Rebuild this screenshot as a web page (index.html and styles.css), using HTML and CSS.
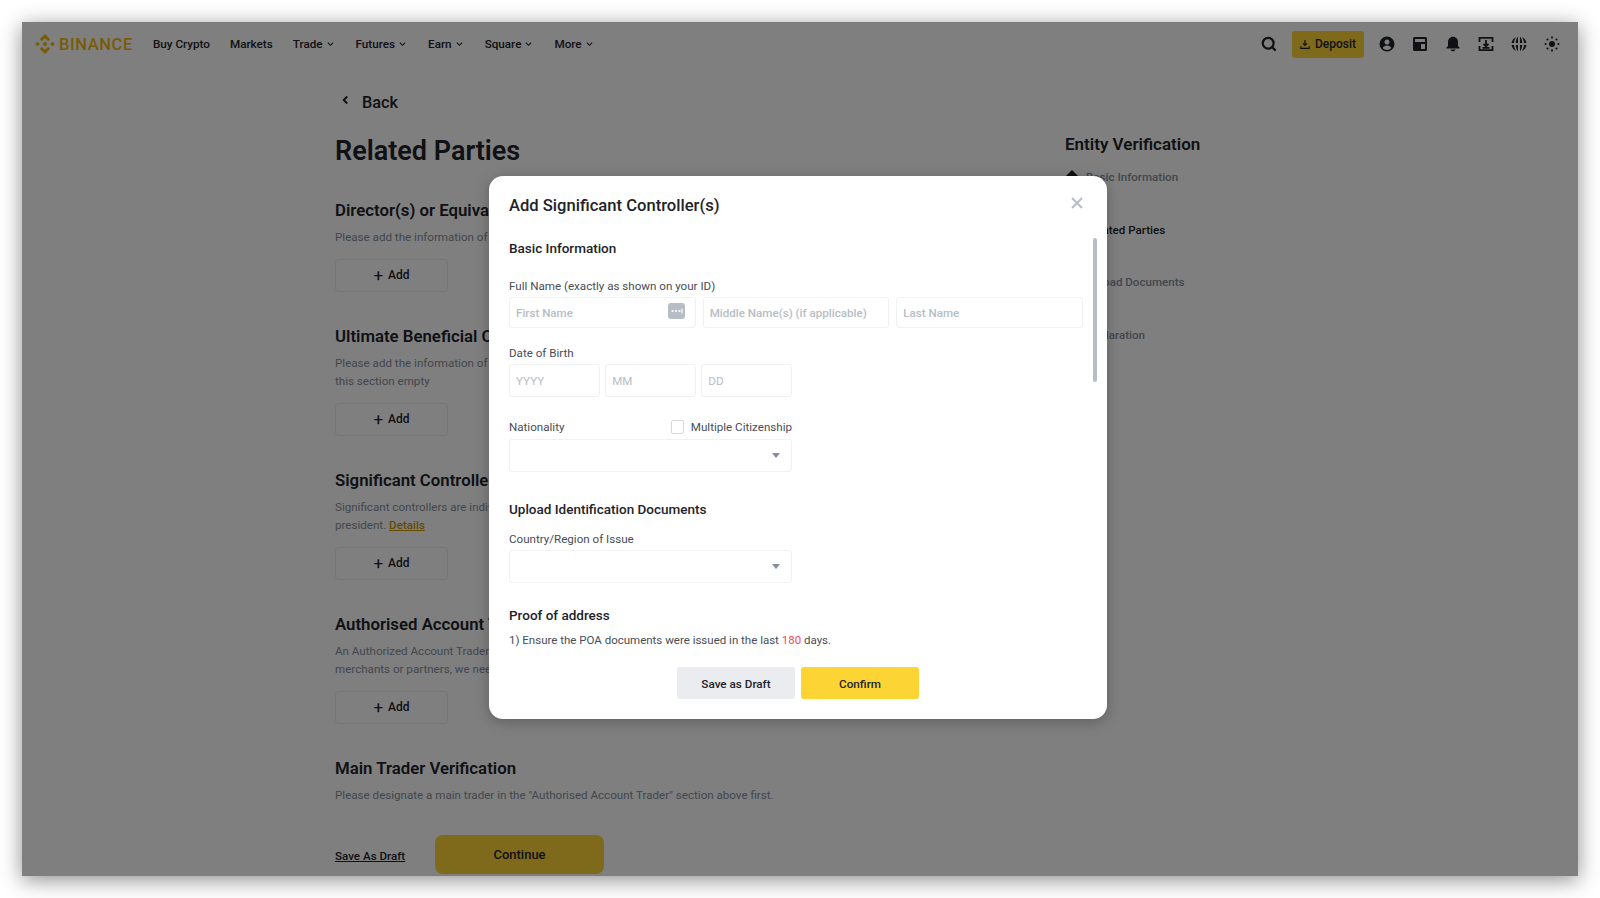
FILE: index.html
```html
<!DOCTYPE html>
<html lang="en">
<head>
    <meta charset="UTF-8">
    <title>Related Parties</title>
    <link rel="stylesheet" href="styles.css">
</head>
<body>
    <div class="frame">
        <header class="nav">
            <a class="logo">
                <svg class="logo-mark" viewBox="2 2 20 20"><path d="M12 2l5.200 5.200-2.100 2.100L12 6.200 8.900 9.300 6.800 7.200zM12 22l5.200-5.200-2.100-2.100-3.100 3.100-3.100-3.100-2.100 2.100zM2.200 12l2.300-2.300L6.800 12l-2.300 2.300zM17.200 12l2.300-2.300 2.300 2.300-2.300 2.300zM12 9.500l2.500 2.500-2.500 2.500L9.500 12z"/></svg>
                <span>BINANCE</span>
            </a>
            <nav class="menu">
                <a>Buy Crypto</a>
                <a>Markets</a>
                <a class="has-caret">Trade <svg class="caret" viewBox="0 0 8 6"><path d="M1 1.500l3 3 3-3"/></svg></a>
                <a class="has-caret">Futures <svg class="caret" viewBox="0 0 8 6"><path d="M1 1.500l3 3 3-3"/></svg></a>
                <a class="has-caret">Earn <svg class="caret" viewBox="0 0 8 6"><path d="M1 1.500l3 3 3-3"/></svg></a>
                <a class="has-caret">Square <svg class="caret" viewBox="0 0 8 6"><path d="M1 1.500l3 3 3-3"/></svg></a>
                <a class="has-caret">More <svg class="caret" viewBox="0 0 8 6"><path d="M1 1.500l3 3 3-3"/></svg></a>
            </nav>
            <div class="nav-right">
                <svg class="nav-icon search" viewBox="0 0 16 16"><circle cx="7.200" cy="7.200" r="5.400"/><path d="M11 11l3.600 3.600"/></svg>
                <button class="deposit">
                    <svg class="deposit-icon" viewBox="0 0 12 12"><path d="M6 .5v6M3.700 4.500L6 7l2.300-2.500M1 8v2.500h10V8" /></svg>
                    Deposit
                </button>
                <div class="nav-icons">
                    <svg class="nav-icon filled" viewBox="0 0 16 16"><path fill-rule="evenodd" d="M8 .5a7.500 7.500 0 100 15 7.500 7.500 0 000-15zm0 3a2.500 2.500 0 110 5 2.500 2.500 0 010-5zM3.600 12c.8-1.600 2.500-2.500 4.400-2.500s3.600.9 4.400 2.500A6 6 0 018 14a6 6 0 01-4.400-2z"/></svg>
                    <svg class="nav-icon filled" viewBox="0 0 16 16"><path fill-rule="evenodd" d="M2.500 1h11A1.500 1.500 0 0115 2.500v11a1.500 1.500 0 01-1.500 1.500h-11A1.500 1.500 0 011 13.500v-11A1.500 1.500 0 012.500 1zM3 3v3h10V3zm6 5v5h4V8z"/></svg>
                    <svg class="nav-icon filled" viewBox="0 0 16 16"><path d="M8 .8c-3 0-5 2.300-5 5.200v4L1.500 11.500v1h13v-1L13 10V6C13 3.100 11 .8 8 .8zM5.500 13.500h5C10.200 14.700 9.200 15.300 8 15.300s-2.200-.6-2.500-1.800z"/></svg>
                    <svg class="nav-icon scan" viewBox="0 0 16 16"><path d="M1.500 6V1.800h13V6M1.500 10v4.200h13V10M8 4v6M5.500 7.800L8 10.300l2.500-2.500M4.500 11.800h7"/></svg>
                    <svg class="nav-icon filled" viewBox="0 0 16 16"><path fill-rule="evenodd" d="M7 .6v6.400H4.800c.1-2.500.9-4.900 2.200-6.400zM9 .6c1.300 1.500 2.100 3.900 2.200 6.400H9zM5 1.200C3.900 2.800 3.100 4.800 3 7H.6C.9 4.300 2.600 2.100 5 1.200zM11 1.200c2.400.9 4.100 3.100 4.400 5.800H13c-.1-2.200-.9-4.200-2-5.800zM.6 9H3c.1 2.200.9 4.200 2 5.800C2.600 13.900.9 11.700.6 9zM4.800 9H7v6.400C5.700 13.900 4.900 11.500 4.800 9zM9 9h2.200c-.1 2.500-.9 4.900-2.200 6.400zM13 9h2.400c-.3 2.700-2 4.900-4.400 5.800 1.100-1.600 1.900-3.600 2-5.800z"/></svg>
                    <svg class="nav-icon filled" viewBox="0 0 16 16"><circle cx="8" cy="8" r="3"/><circle cx="8" cy="1.600" r="1.100"/><circle cx="8" cy="14.400" r="1.100"/><circle cx="1.600" cy="8" r="1.100"/><circle cx="14.400" cy="8" r="1.100"/><circle cx="3.500" cy="3.500" r="1.100"/><circle cx="12.500" cy="3.500" r="1.100"/><circle cx="3.500" cy="12.500" r="1.100"/><circle cx="12.500" cy="12.500" r="1.100"/></svg>
                </div>
            </div>
        </header>

        <main class="page">
            <div class="content">
                <a class="back">
                    <svg class="back-icon" viewBox="0 0 8 10"><path d="M6 1L2 5l4 4"/></svg>
                    Back
                </a>
                <h1>Related Parties</h1>

                <section class="section first">
                    <h2>Director(s) or Equivalent</h2>
                    <p>Please add the information of your company's directors or equivalent.</p>
                    <button class="add"><span class="plus">+</span> Add</button>
                </section>

                <section class="section">
                    <h2>Ultimate Beneficial Owner(s)</h2>
                    <p>Please add the information of all ultimate beneficial owners. If there are none, you may leave<br>this section empty</p>
                    <button class="add"><span class="plus">+</span> Add</button>
                </section>

                <section class="section">
                    <h2>Significant Controller(s)</h2>
                    <p>Significant controllers are individuals with significant control of the entity, such as a CEO or<br>president. <a class="details">Details</a></p>
                    <button class="add"><span class="plus">+</span> Add</button>
                </section>

                <section class="section">
                    <h2>Authorised Account Trader(s)</h2>
                    <p>An Authorized Account Trader is a person acting on behalf of the entity. To protect our<br>merchants or partners, we need the information of every trader.</p>
                    <button class="add"><span class="plus">+</span> Add</button>
                </section>

                <section class="section">
                    <h2>Main Trader Verification</h2>
                    <p>Please designate a main trader in the "Authorised Account Trader" section above first.</p>
                </section>

                <div class="page-actions">
                    <a class="save-link">Save As Draft</a>
                    <button class="continue">Continue</button>
                </div>
            </div>

            <aside class="side">
                <h3>Entity Verification</h3>
                <ul class="steps">
                    <li><i class="step-dot"></i>Basic Information</li>
                    <li class="current"><i class="step-dot"></i>Related Parties</li>
                    <li><i class="step-dot"></i>Upload Documents</li>
                    <li><i class="step-dot"></i>Declaration</li>
                </ul>
            </aside>
        </main>

        <div class="overlay">
            <div class="modal">
                <div class="modal-head">
                    <h2>Add Significant Controller(s)</h2>
                    <svg class="close" viewBox="0 0 12 12"><path d="M1 1l10 10M11 1L1 11"/></svg>
                </div>
                <div class="modal-body">
                    <h4 class="block-title">Basic Information</h4>

                    <label class="label name-label">Full Name (exactly as shown on your ID)</label>
                    <div class="name-row">
                        <div class="input">First Name
                            <svg class="key-icon" viewBox="0 0 17 16"><rect width="17" height="16" rx="3"/><circle cx="4.500" cy="8" r="1.100"/><circle cx="8" cy="8" r="1.100"/><circle cx="11.500" cy="8" r="1.100"/><path d="M14 5.500v5"/></svg>
                        </div>
                        <div class="input">Middle Name(s) (if applicable)</div>
                        <div class="input">Last Name</div>
                    </div>

                    <label class="label dob-label">Date of Birth</label>
                    <div class="dob-row">
                        <div class="input tall">YYYY</div>
                        <div class="input tall">MM</div>
                        <div class="input tall">DD</div>
                    </div>

                    <div class="nat-row">
                        <label class="label">Nationality</label>
                        <label class="check"><i class="box"></i>Multiple Citizenship</label>
                    </div>
                    <div class="select nat-select"><i class="arrow"></i></div>

                    <h4 class="block-title upload-title">Upload Identification Documents</h4>
                    <label class="label country-label">Country/Region of Issue</label>
                    <div class="select country-select"><i class="arrow"></i></div>

                    <h4 class="block-title proof-title">Proof of address</h4>
                    <p class="note">1) Ensure the POA documents were issued in the last <span class="red">180</span> days.</p>
                </div>
                <div class="modal-foot">
                    <button class="btn grey">Save as Draft</button>
                    <button class="btn yellow">Confirm</button>
                </div>
                <div class="scrollbar"></div>
            </div>
        </div>
    </div>
</body>
</html>
```

FILE: styles.css
```css
* {
    box-sizing: border-box;
}
html, body {
    height: 100%;
}
body {
    margin: 0;
    padding: 22px;
    background: #fff;
    overflow: hidden;
    font-family: Roboto, "Noto Sans", sans-serif;
    color: #1e2329;
}
h1, h2, h3, h4, p, ul {
    margin: 0;
    padding: 0;
}
button {
    font-family: inherit;
    border: 0;
    cursor: pointer;
}

.frame {
    position: relative;
    width: 1556px;
    height: 854px;
    background: #fff;
    overflow: hidden;
    box-shadow: 0 4px 20px rgba(0, 0, 0, .45);
}

/* top bar */
.nav {
    display: flex;
    align-items: center;
    height: 44px;
    padding: 0 18px 0 13px;
}
.logo {
    display: flex;
    align-items: center;
    gap: 4px;
    color: #f0b90b;
    font-size: 16.500px;
    font-weight: 500;
    letter-spacing: .6px;
}
.logo-mark {
    width: 20px;
    height: 20px;
    fill: #f0b90b;
}
.menu {
    display: flex;
    align-items: center;
    gap: 20px;
    margin-left: 20px;
    font-size: 11.700px;
    font-weight: 500;
}
.has-caret {
    display: flex;
    align-items: center;
    gap: 4px;
    margin-right: 2px;
}
.caret {
    width: 7px;
    height: 6px;
    fill: none;
    stroke: #1e2329;
    stroke-width: 1.300;
}
.nav-right {
    display: flex;
    align-items: center;
    margin-left: auto;
}
.nav-icons {
    display: flex;
    gap: 17px;
    margin-left: 15px;
}
.nav-icon {
    display: block;
    width: 16px;
    height: 16px;
}
.nav-icon.filled {
    fill: #1e2329;
}
.nav-icon.search {
    margin-right: 15px;
    fill: none;
    stroke: #1e2329;
    stroke-width: 2.200;
}
.nav-icon.scan {
    fill: none;
    stroke: #1e2329;
    stroke-width: 1.800;
}
.deposit {
    display: flex;
    align-items: center;
    justify-content: center;
    gap: 5px;
    width: 72px;
    height: 27px;
    border-radius: 3px;
    background: #fcd535;
    font-size: 12px;
    font-weight: 500;
    color: #1e2329;
}
.deposit-icon {
    width: 10px;
    height: 11px;
    fill: none;
    stroke: #1e2329;
    stroke-width: 1.500;
}

/* page behind the dialog */
.page {
    display: flex;
    padding-left: 313px;
}
.content {
    width: 730px;
}
.back {
    display: flex;
    align-items: center;
    gap: 13px;
    height: 24px;
    margin: 24px 0 0 7px;
    font-size: 16.300px;
    font-weight: 500;
}
.back-icon {
    width: 7px;
    height: 10px;
    margin-top: -4px;
    fill: none;
    stroke: #1e2329;
    stroke-width: 2.200;
}
h1 {
    margin-top: 19px;
    font-size: 27px;
    line-height: 36px;
    font-weight: 600;
}
.section {
    margin-top: 33px;
}
.section.first {
    margin-top: 30px;
}
.section h2 {
    font-size: 16.800px;
    line-height: 22px;
    font-weight: 600;
}
.section p {
    margin-top: 7px;
    font-size: 11.600px;
    line-height: 18px;
    color: #848e9c;
}
.details {
    color: #c99400;
    font-weight: 500;
    text-decoration: underline;
}
.add {
    display: flex;
    align-items: center;
    justify-content: center;
    gap: 5px;
    width: 113px;
    height: 33.500px;
    margin-top: 12.500px;
    background: #fff;
    border: 1px solid #eaecef;
    border-radius: 4px;
    font-size: 12px;
    font-weight: 500;
    color: #1e2329;
}
.plus {
    font-size: 17px;
    line-height: 1;
    font-weight: 400;
}
.page-actions {
    display: flex;
    align-items: center;
    gap: 30px;
    margin-top: 31px;
}
.save-link {
    width: 70px;
    padding-top: 2px;
    font-size: 11.600px;
    font-weight: 500;
    white-space: nowrap;
    text-decoration: underline;
}
.continue {
    width: 169px;
    height: 39px;
    border-radius: 8px;
    background: #fcd535;
    font-size: 13px;
    font-weight: 500;
    color: #1e2329;
}

/* steps on the right */
.side {
    margin-top: 66px;
}
.side h3 {
    font-size: 17px;
    line-height: 24px;
    font-weight: 600;
}
.steps {
    margin-top: 11px;
    list-style: none;
    font-size: 11.600px;
    color: #848e9c;
    font-weight: 500;
}
.steps li {
    display: flex;
    align-items: center;
    gap: 9px;
    height: 20px;
    margin-bottom: 32.500px;
}
.steps .current {
    color: #1e2329;
}
.step-dot {
    width: 10px;
    height: 10px;
    margin-left: 2px;
    background: #1e2329;
    transform: rotate(45deg);
}

/* dialog */
.overlay {
    position: absolute;
    top: 0;
    right: 0;
    bottom: 0;
    left: 0;
    display: flex;
    align-items: center;
    justify-content: center;
    padding: 0 4px 3px 0;
    background: rgba(0, 0, 0, .5);
}
.modal {
    position: relative;
    display: flex;
    flex-direction: column;
    width: 618px;
    height: 543px;
    border-radius: 14px;
    background: #fff;
    box-shadow: 0 3px 14px rgba(0, 0, 0, .25);
}
.modal-head {
    display: flex;
    align-items: center;
    justify-content: space-between;
    height: 59px;
    padding: 0 24px 0 20px;
}
.modal-head h2 {
    font-size: 16.600px;
    font-weight: 500;
}
.close {
    width: 12px;
    height: 12px;
    margin-top: -6px;
    fill: none;
    stroke: #b7bdc6;
    stroke-width: 2;
}
.modal-body {
    flex: 1;
    min-height: 0;
    overflow: hidden;
    padding: 3px 24px 0 20px;
}
.block-title {
    font-size: 13.500px;
    line-height: 20px;
    font-weight: 500;
}
.label {
    display: block;
    font-size: 11.600px;
    line-height: 16px;
    color: #474d57;
}
.name-label {
    margin-top: 20px;
}
.name-row {
    display: grid;
    grid-template-columns: repeat(3, 1fr);
    gap: 7px;
    margin-top: 3px;
}
.input {
    display: flex;
    align-items: center;
    justify-content: space-between;
    height: 31px;
    padding: 1px 0 0 6px;
    border: 1px solid #f0f1f2;
    border-radius: 3px;
    font-size: 11.600px;
    font-weight: 500;
    color: #b7bdc6;
}
.input.tall {
    height: 33px;
    font-weight: 400;
}
.key-icon {
    width: 17px;
    height: 16px;
    margin: -4px 10px 0 0;
    fill: #b7bdc6;
    stroke: none;
}
.key-icon circle {
    fill: #fff;
}
.key-icon path {
    stroke: #fff;
    stroke-width: 1.200;
}
.dob-label {
    margin-top: 17px;
}
.dob-row {
    display: grid;
    grid-template-columns: repeat(3, 1fr);
    gap: 5.500px;
    width: 283px;
    margin-top: 3px;
}
.nat-row {
    display: flex;
    align-items: center;
    justify-content: space-between;
    width: 283px;
    height: 16px;
    margin-top: 22px;
}
.check {
    display: flex;
    align-items: center;
    gap: 7px;
    font-size: 11.600px;
    color: #474d57;
}
.box {
    width: 13px;
    height: 14px;
    border: 1px solid #d5d9df;
    border-radius: 2px;
}
.select {
    position: relative;
    display: flex;
    align-items: center;
    justify-content: flex-end;
    width: 283px;
    height: 33px;
    padding-right: 11px;
    border: 1px solid #f0f1f2;
    border-radius: 3px;
}
.nat-select {
    margin-top: 4px;
}
.arrow {
    width: 0;
    height: 0;
    border-style: solid;
    border-width: 5px 4px 0;
    border-color: #848e9c transparent transparent;
}
.upload-title {
    margin-top: 27px;
}
.country-label {
    margin-top: 12px;
}
.country-select {
    margin-top: 3px;
}
.proof-title {
    margin-top: 22px;
}
.note {
    margin-top: 7px;
    font-size: 11.500px;
    line-height: 16px;
    color: #474d57;
}
.red {
    color: #f6465d;
}
.modal-foot {
    display: flex;
    justify-content: center;
    gap: 6px;
    padding-bottom: 20px;
}
.btn {
    width: 118px;
    height: 32px;
    padding-top: 2px;
    border-radius: 3px;
    font-size: 11.700px;
    font-weight: 500;
    color: #1e2329;
}
.btn.grey {
    background: #eaecef;
}
.btn.yellow {
    background: #fcd535;
}
.scrollbar {
    position: absolute;
    top: 62px;
    right: 10px;
    width: 4px;
    height: 144px;
    border-radius: 2px;
    background: #b7bdc6;
}
```
